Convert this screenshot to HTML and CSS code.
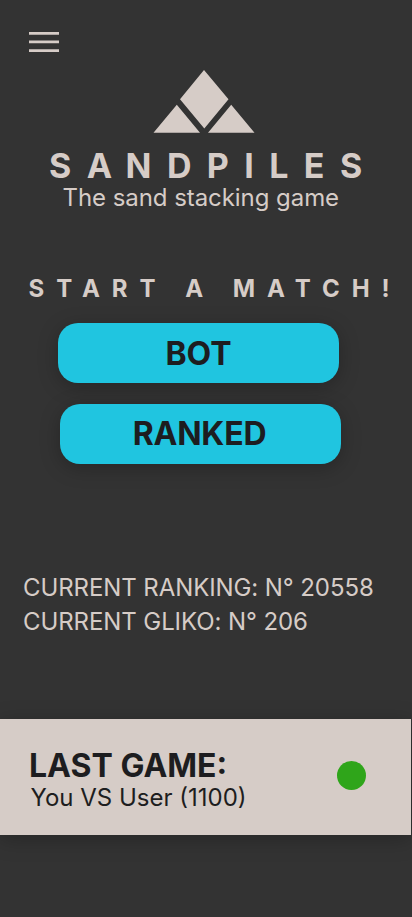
FILE: index.html
```html
<!DOCTYPE html>
<html lang="en">
<head>
<meta charset="utf-8">
<title>Sandpiles</title>
<link rel="stylesheet" href="styles.css">
</head>
<body>
<main class="screen">
  <button class="menu" aria-label="Menu">
    <svg width="30" height="20" viewBox="0 0 30 20" aria-hidden="true"><path d="M0 0h30v2.700H0ZM0 8.600h30v2.700H0ZM0 17.300h30v2.700H0Z"/></svg>
  </button>
  <header class="brand">
    <svg class="logo" width="102" height="63" viewBox="0 0 102 63" aria-hidden="true">
      <path d="M51 0 75.500 29.300 51.300 58.500 27 29.300Z M.5 62.700 23.800 34.700 47 62.700Z M55 62.700 78.200 34.700 101.500 62.700Z"/>
    </svg>
    <h1>S<span class="wide-cap">A</span>NDPILES</h1>
    <p>The sand stacking game</p>
  </header>
  <section class="match">
    <h2>START A MATCH!</h2>
    <button class="play bot">BOT</button>
    <button class="play ranked">RANKED</button>
  </section>
  <section class="stats">
    <p>CURRENT RANKING: N° 20558</p>
    <p>CURRENT GLIKO: N° 206</p>
  </section>
  <section class="last">
    <div>
      <h3>LAST GAME:</h3>
      <p>You VS User (1100)</p>
    </div>
    <span class="status"></span>
  </section>
</main>
</body>
</html>
```
FILE: styles.css
```css
* { box-sizing: border-box; margin: 0; padding: 0; }
body { background: #333; font-family: Inter, sans-serif; color: #d6ccc7; }
.screen { width: 412px; height: 917px; overflow: hidden; display: flex; flex-direction: column; white-space: nowrap; }
.menu { width: 30px; height: 20px; margin: 32px 0 0 29px; border: 0; background: none; flex: none; }
.menu svg { display: block; fill: #d6ccc7; }
.brand { height: 226px; padding-top: 18px; flex: none; }
.logo { display: block; margin-left: 153px; fill: #d6ccc7; }
.brand h1 { font: 700 34px/36px Inter, sans-serif; letter-spacing: 15.4px; margin: 15px 0 0 49px; }
.wide-cap { letter-spacing: 13.5px; }
.brand p { font-size: 24px; line-height: 29px; letter-spacing: -.06px; margin: -1px 0 0 62.5px; }
.match { height: 293px; flex: none; }
.match h2 { font-size: 24px; line-height: 29px; letter-spacing: 11.95px; margin: -4px 0 0 28.5px; }
.play { display: block; width: 281px; height: 60px; border: 0; border-radius: 20px; background: #20c5e0; color: #1d1d20; font: 700 32px/60px Inter, sans-serif; box-shadow: 0 4px 20px rgba(0,0,0,.25); }
.bot { margin: 20px 0 0 58px; padding-top: 1px; }
.ranked { margin: 21px 0 0 60px; padding-right: 2px; letter-spacing: -.2px; }
.stats { height: 148px; padding-left: 23px; font-size: 24px; letter-spacing: -.09px; line-height: 34px; flex: none; }
.last { width: 411px; height: 116px; flex: none; background: #d6ccc7; color: #1d1d20; display: flex; justify-content: space-between; padding: 29px 45px 0 29px; box-shadow: 0 4px 20px rgba(0,0,0,.25); }
.last h3 { font-size: 32px; line-height: 36px; }
.last p { font-size: 24px; line-height: 28px; margin-left: 1.5px; }
.status { width: 29px; height: 29px; margin-top: 13px; border-radius: 50%; background: #2fa51a; }
```
